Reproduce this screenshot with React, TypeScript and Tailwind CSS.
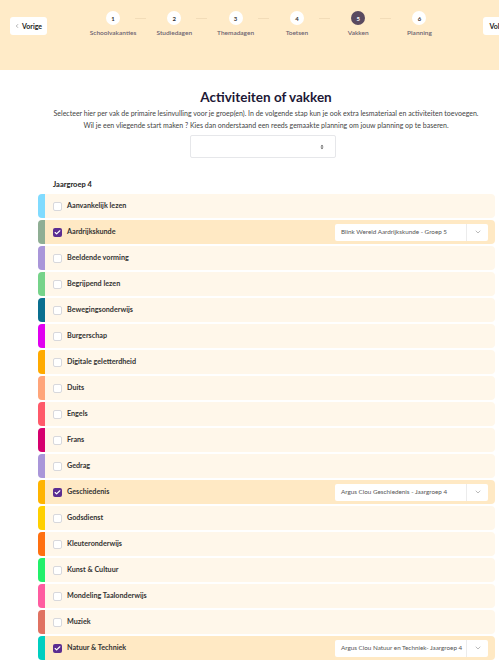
import { ChevronDown, ChevronLeft, Check } from 'lucide-react';

const steps = ['Schoolvakanties', 'Studiedagen', 'Themadagen', 'Toetsen', 'Vakken', 'Planning'];

const subjects = [
  { name: 'Aanvankelijk lezen', color: 'bg-[#80dbff]' },
  { name: 'Aardrijkskunde', color: 'bg-[#8fae94]', method: 'Blink Wereld Aardrijkskunde - Groep 5' },
  { name: 'Beeldende vorming', color: 'bg-[#a996d9]' },
  { name: 'Begrijpend lezen', color: 'bg-[#76d38a]' },
  { name: 'Bewegingsonderwijs', color: 'bg-[#0a6f8f]' },
  { name: 'Burgerschap', color: 'bg-[#e000f0]' },
  { name: 'Digitale geletterdheid', color: 'bg-[#ffaa00]' },
  { name: 'Duits', color: 'bg-[#ffa57a]' },
  { name: 'Engels', color: 'bg-[#ff5a6a]' },
  { name: 'Frans', color: 'bg-[#d6006e]' },
  { name: 'Gedrag', color: 'bg-[#a996d9]' },
  { name: 'Geschiedenis', color: 'bg-[#ffb400]', method: 'Argus Clou Geschiedenis - Jaargroep 4' },
  { name: 'Godsdienst', color: 'bg-[#ffd000]' },
  { name: 'Kleuteronderwijs', color: 'bg-[#ff7010]' },
  { name: 'Kunst & Cultuur', color: 'bg-[#22f06a]' },
  { name: 'Mondeling Taalonderwijs', color: 'bg-[#ff5ca0]' },
  { name: 'Muziek', color: 'bg-[#e07262]' },
  { name: 'Natuur & Techniek', color: 'bg-[#00cfc0]', method: 'Argus Clou Natuur en Techniek- Jaargroep 4' },
  { name: 'Nederlands', color: 'bg-[#4db8ff]' },
];

function Stepper() {
  return (
    <div className="ml-[46px] flex shrink-0 items-start">
      {steps.map((label, i) => (
        <div key={label} className="flex shrink-0 items-start">
          <div className="flex w-[40px] shrink-0 flex-col items-center">
            <div
              className={
                i === 4
                  ? 'flex h-[14px] w-[14px] items-center justify-center rounded-full bg-[#5a4a60] text-[6px] font-bold text-white'
                  : 'flex h-[14px] w-[14px] items-center justify-center rounded-full bg-white text-[6px] font-bold text-[#333]'
              }
            >
              {i + 1}
            </div>
            <div className="mt-[5px] whitespace-nowrap text-[6.5px] font-semibold leading-none text-[#6b6270]">{label}</div>
          </div>
          {i < steps.length - 1 && (
            <div className="w-[21.3px] shrink-0">
              <div className="ml-[2px] mt-[6.5px] h-px w-[11px] bg-[#f2dcb8]" />
            </div>
          )}
        </div>
      ))}
    </div>
  );
}

function SubjectRow({ name, color, method }: { name: string; color: string; method?: string }) {
  const selected = !!method;
  return (
    <div className="flex h-[24px]">
      <div className={`w-[7px] rounded-l-[4px] ${color}`} />
      <div
        className={
          selected
            ? 'flex flex-1 items-center rounded-r-[4px] bg-[#ffe9c4] pl-[8px] pr-[7px]'
            : 'flex flex-1 items-center rounded-r-[4px] bg-[#fff7ea] pl-[8px] pr-[7px]'
        }
      >
        {selected ? (
          <div className="flex h-[9px] w-[9px] items-center justify-center rounded-[2px] bg-[#5b2d91]">
            <Check className="h-[7px] w-[7px] text-white" strokeWidth={4} />
          </div>
        ) : (
          <div className="h-[9px] w-[9px] rounded-[2px] border border-[#d8d8dc] bg-white" />
        )}
        <span className="ml-[5px] text-[7.2px] font-bold text-[#333]">{name}</span>
        {method && (
          <div className="ml-auto flex h-[17px] w-[153px] items-center rounded-[2px] bg-white">
            <span className="flex-1 truncate pl-[6px] text-[6.3px] text-[#555]">{method}</span>
            <div className="flex h-full w-[22px] items-center justify-center border-l border-[#ececec]">
              <ChevronDown className="h-[8px] w-[8px] text-[#777]" strokeWidth={1.5} />
            </div>
          </div>
        )}
      </div>
    </div>
  );
}

export default function App() {
  return (
    <div className="h-[662px] w-[499px] overflow-hidden bg-white font-['Lato',sans-serif]">
      <div className="flex h-[70px] items-start bg-[#ffebc8] pt-[11px]">
        <button className="ml-[10px] mt-[6px] flex h-[18px] w-[37px] shrink-0 items-center rounded-[3px] bg-white pl-[4px]">
          <ChevronLeft className="h-[6px] w-[6px] text-[#666]" strokeWidth={2} />
          <span className="ml-[2px] text-[7px] font-bold text-[#222]">Vorige</span>
        </button>
        <Stepper />
        <button className="ml-[44px] mt-[6px] flex h-[18px] w-[44px] shrink-0 items-center rounded-[3px] bg-white pl-[6px]">
          <span className="text-[7px] font-bold text-[#222]">Volgende</span>
        </button>
      </div>

      <div className="flex flex-col items-center pl-[33px] pt-[18px]">
        <h1 className="text-[13.5px] font-bold leading-[18px] text-[#1d1836]">Activiteiten of vakken</h1>
        <p className="mt-[1px] whitespace-nowrap text-center text-[7px] leading-[12px] text-[#444]">
          Selecteer hier per vak de primaire lesinvulling voor je groep(en). In de volgende stap kun je ook extra lesmateriaal en activiteiten toevoegen.
          <br />
          Wil je een vliegende start maken ? Kies dan onderstaand een reeds gemaakte planning om jouw planning op te baseren.
        </p>
        <div className="mr-[6px] mt-[4px] flex h-[23px] w-[146px] items-center justify-end rounded-[2px] border border-[#e6e7ea] pr-[11px]">
          <svg width="4" height="6" viewBox="0 0 4 6">
            <path d="M0.5 2.4 L2 0.8 L3.5 2.4 Z M0.5 3.6 L2 5.2 L3.5 3.6 Z" fill="#555" />
          </svg>
        </div>
      </div>

      <div className="ml-[38px] mr-[4px] mt-[22px]">
        <div className="mb-[4px] ml-[15px] text-[7.5px] font-bold leading-[10px] text-[#222]">Jaargroep 4</div>
        <div className="flex flex-col gap-[2px]">
          {subjects.map((s) => (
            <SubjectRow key={s.name} {...s} />
          ))}
        </div>
      </div>
    </div>
  );
}
